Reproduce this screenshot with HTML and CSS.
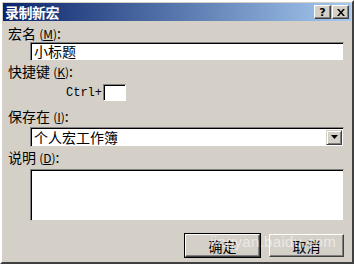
FILE: index.html
```html
<!DOCTYPE html>
<html lang="zh-CN">
<head>
    <meta charset="UTF-8">
    <title>录制新宏</title>
    <link rel="stylesheet" href="styles.css">
</head>
<body>
    <div class="dialog">
        <div class="titlebar">
            <span class="title">录制新宏</span>
            <div class="caption-buttons">
                <span class="cap-btn">?</span>
                <span class="cap-btn">
                    <svg width="8" height="7" viewBox="0 0 8 7"><path d="M0 0h2l2 2.5L6 0h2L5 3.5 8 7H6L4 4.5 2 7H0l3-3.5z" fill="#000"/></svg>
                </span>
            </div>
        </div>

        <div class="content">
            <div class="label">宏名 <span class="key">(<u>M</u>)</span>:</div>
            <div class="field">小标题</div>

            <div class="label">快捷键 <span class="key">(<u>K</u>)</span>:</div>
            <div class="shortcut">
                <span class="ctrl">Ctrl+</span>
                <span class="keybox"></span>
            </div>

            <div class="label">保存在 <span class="key">(<u>I</u>)</span>:</div>
            <div class="field select">
                <span>个人宏工作簿</span>
                <span class="drop">
                    <svg width="7" height="4" viewBox="0 0 7 4"><path d="M0 0h7L3.5 4z" fill="#000"/></svg>
                </span>
            </div>

            <div class="label">说明 <span class="key">(<u>D</u>)</span>:</div>
            <div class="field memo"></div>

            <div class="buttons">
                <span class="btn default">确定</span>
                <span class="btn">取消</span>
            </div>
            <span class="watermark">jingyan.baidu.com</span>
        </div>
    </div>
</body>
</html>
```

FILE: styles.css
```css
body {
    margin: 0;
    font-family: "Noto Sans CJK SC", "Liberation Sans", sans-serif;
    font-size: 14px;
    color: #000;
}

.dialog {
    width: 354px;
    height: 264px;
    box-sizing: border-box;
    background-color: #d4d0c8;
    border-top: 2px solid #fff;
    border-left: 2px solid #fff;
    border-right: 2px solid #404040;
    border-bottom: 2px solid #404040;
    padding: 1px;
    display: flex;
    flex-direction: column;
}

.titlebar {
    height: 18px;
    background: linear-gradient(to right, #0a246a, #a6caf0);
    display: flex;
    align-items: center;
    justify-content: space-between;
    padding: 0 2px 0 2px;
}

.title {
    color: #fff;
    font-weight: bold;
    font-size: 14px;
    line-height: 18px;
    letter-spacing: -0.5px;
}

.caption-buttons {
    display: flex;
}

.cap-btn {
    width: 17px;
    height: 14px;
    box-sizing: border-box;
    background-color: #d4d0c8;
    border-top: 1px solid #fff;
    border-left: 1px solid #fff;
    border-right: 1px solid #404040;
    border-bottom: 1px solid #404040;
    box-shadow: inset -1px -1px #808080;
    display: flex;
    align-items: center;
    justify-content: center;
    font-family: "DejaVu Sans", sans-serif;
    font-weight: bold;
    font-size: 11px;
    line-height: 1;
}

.cap-btn + .cap-btn {
    margin-left: 1px;
}

.content {
    position: relative;
    flex: 1;
    padding: 4px 7px 0 5px;
    display: flex;
    flex-direction: column;
}

.label {
    height: 17px;
    line-height: 16px;
    white-space: nowrap;
}

.key {
    font-size: 12px;
}

.field {
    margin-left: 22px;
    height: 19px;
    box-sizing: border-box;
    background-color: #fff;
    border-top: 1px solid #808080;
    border-left: 1px solid #808080;
    border-right: 1px solid #d4d0c8;
    border-bottom: 1px solid #d4d0c8;
    box-shadow: inset 1px 1px #000;
    padding-left: 3px;
    line-height: 17px;
    margin-bottom: 2px;
}

.shortcut {
    display: flex;
    align-items: center;
    margin: 4px 0 7px 58px;
    height: 17px;
}

.ctrl {
    font-family: "Liberation Mono", monospace;
    font-size: 12px;
    margin-right: 1px;
}

.keybox {
    width: 23px;
    height: 17px;
    box-sizing: border-box;
    background-color: #fff;
    border-top: 1px solid #808080;
    border-left: 1px solid #808080;
    border-right: 1px solid #fff;
    border-bottom: 1px solid #fff;
    box-shadow: inset 1px 1px #000;
}

.select {
    height: 20px;
    margin-top: 2px;
    display: flex;
    justify-content: space-between;
    align-items: center;
    padding-right: 1px;
}

.drop {
    width: 16px;
    height: 15px;
    box-sizing: border-box;
    background-color: #d4d0c8;
    border-top: 1px solid #d4d0c8;
    border-left: 1px solid #d4d0c8;
    border-right: 1px solid #404040;
    border-bottom: 1px solid #404040;
    box-shadow: inset 1px 1px #fff, inset -1px -1px #808080;
    display: flex;
    align-items: center;
    justify-content: center;
}

.memo {
    height: 52px;
    margin-top: 3px;
}

.buttons {
    display: flex;
    justify-content: flex-end;
    gap: 9px;
    margin-top: 11px;
}

.btn {
    width: 75px;
    height: 23px;
    box-sizing: border-box;
    border-top: 1px solid #fff;
    border-left: 1px solid #fff;
    border-right: 1px solid #404040;
    border-bottom: 1px solid #404040;
    box-shadow: inset -1px -1px #808080;
    display: flex;
    align-items: center;
    justify-content: center;
    line-height: 1;
}

.btn.default {
    outline: 1px solid #000;
}

.watermark {
    position: absolute;
    left: 207px;
    top: 212px;
    font-family: "Liberation Sans", sans-serif;
    font-size: 15px;
    color: rgba(255, 255, 255, 0.55);
    letter-spacing: 0.3px;
}
```
